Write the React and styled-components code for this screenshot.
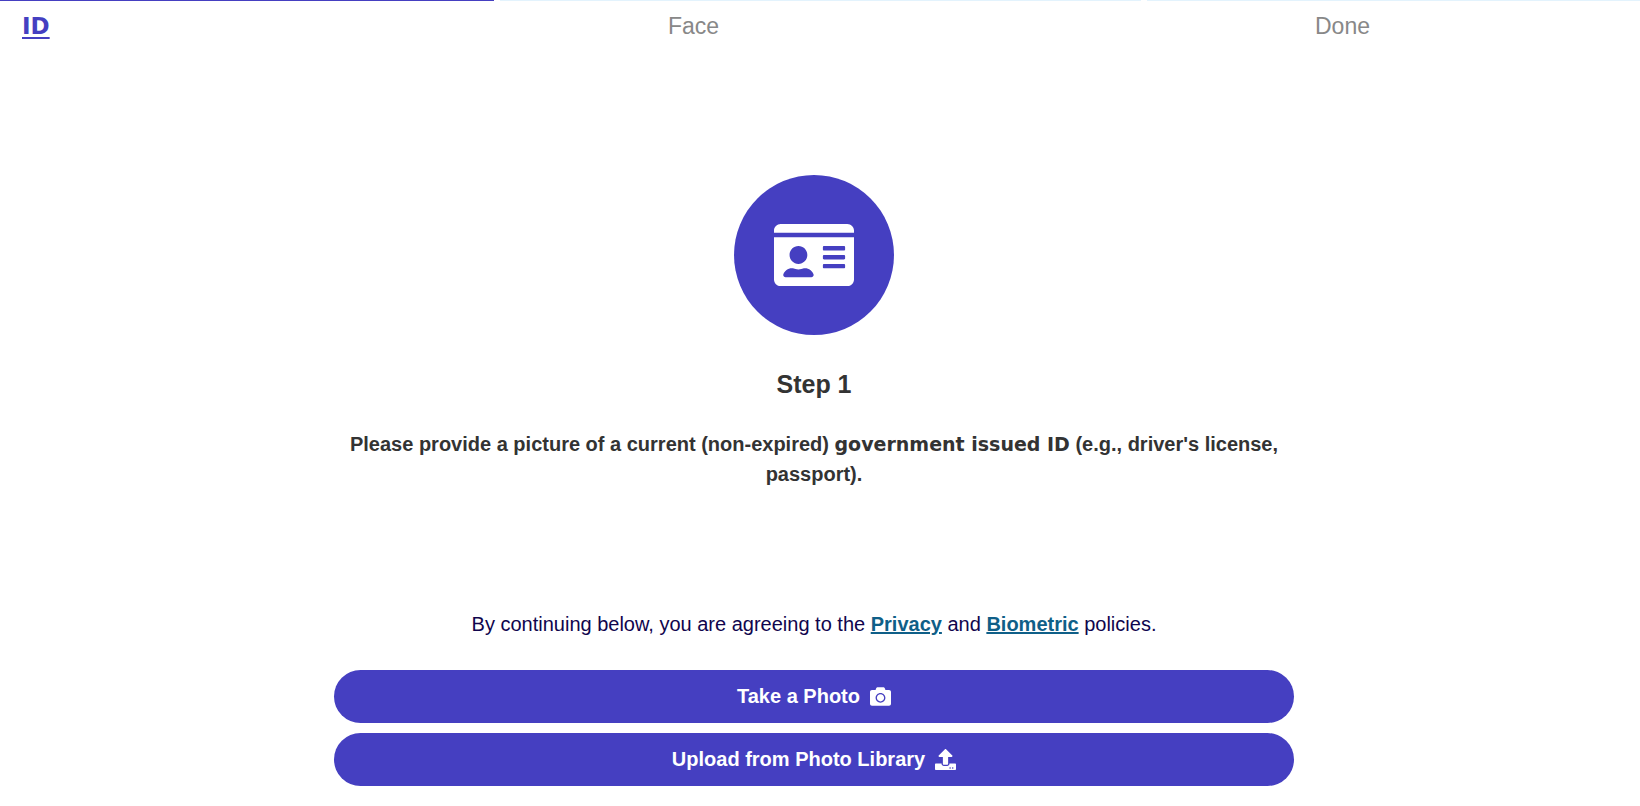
import styled, { createGlobalStyle } from "styled-components"
import { FaIdCard, FaCamera, FaUpload } from "react-icons/fa"

const GlobalStyle = createGlobalStyle`
* {
    box-sizing: border-box;
}
body {
    margin: 0;
    background: #fff;
    color: #333;
    font-family: "Liberation Sans", Arial, sans-serif;
    font-size: 20px;
    line-height: 30px;
}
`

const Steps = styled.ol`
display: grid;
grid-template-columns: 494fr 641fr 493fr;
gap: 6px;
margin: 0;
padding: 0;
list-style: none;
`

const Step = styled.li`
padding: 10px 0 0 ${(props) => (props.$active ? "22px" : "168px")};
border-top: 1px solid ${(props) => (props.$active ? "#453fc1" : "#e3f3fd")};
color: ${(props) => (props.$active ? "#453fc1" : "#888")};
font-size: 23px;
`

const Heavy = styled.strong`
font-family: "DejaVu Sans", "Liberation Sans", sans-serif;
font-size: 19px;
font-weight: 900;
line-height: 1;
`

const ActiveLabel = styled(Heavy)`
font-size: 23px;
text-decoration: underline;
text-decoration-thickness: 2px;
text-underline-offset: 3px;
`

const Page = styled.div`
padding-right: 12px;
`

const Main = styled.main`
display: flex;
flex-direction: column;
align-items: center;
max-width: 960px;
margin: 134px auto 0;
padding-bottom: 20px;
text-align: center;
`

const Circle = styled.div`
display: flex;
align-items: center;
justify-content: center;
width: 160px;
height: 160px;
border-radius: 50%;
background: #453fc1;
color: #fff;
font-size: 80px;
`

const Title = styled.h1`
margin: 34px 0 0;
font-size: 25px;
line-height: 30px;
`

const Text = styled.p`
margin: 30px 0 0;
font-weight: bold;
`

const Policies = styled.p`
margin: 120px 0 31px;
color: #10054d;
`

const PolicyLink = styled.a`
color: #0f5f88;
font-weight: bold;
text-decoration: underline;
`

const Buttons = styled.div`
display: flex;
flex-direction: column;
gap: 10px;
width: 100%;
`

const Button = styled.button`
display: flex;
align-items: center;
justify-content: center;
gap: 10px;
height: 53px;
border: 0;
border-radius: 27px;
background: #453fc1;
color: #fff;
font: bold 20px "Liberation Sans", Arial, sans-serif;
cursor: pointer;
svg {
    width: 21px;
    height: 21px;
}
`

export default function App() {
    return <>
        <GlobalStyle />
        <Steps>
            <Step $active aria-current="step"><ActiveLabel>ID</ActiveLabel></Step>
            <Step>Face</Step>
            <Step>Done</Step>
        </Steps>
        <Page>
            <Main>
                <Circle><FaIdCard /></Circle>
                <Title>Step 1</Title>
                <Text>
                    Please provide a picture of a current (non-expired) <Heavy>government issued ID</Heavy> (e.g., driver's license, passport).
                </Text>
                <Policies>
                    By continuing below, you are agreeing to the <PolicyLink href="#privacy">Privacy</PolicyLink> and <PolicyLink href="#biometric">Biometric</PolicyLink> policies.
                </Policies>
                <Buttons>
                    <Button type="button">Take a Photo <FaCamera /></Button>
                    <Button type="button">Upload from Photo Library <FaUpload /></Button>
                </Buttons>
            </Main>
        </Page>
    </>
}
